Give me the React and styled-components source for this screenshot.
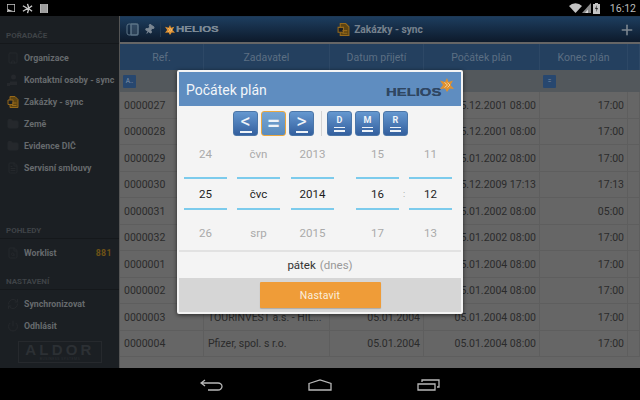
import React from 'react'
import styled, { createGlobalStyle } from 'styled-components'
import { Building, FileText, Folder, Power, RefreshCw, Pin, Plus, FileSearch } from 'lucide-react'

const GlobalStyle = createGlobalStyle`
    html, body { margin: 0; padding: 0; background: #000; }
    * { box-sizing: border-box; }
    body { font-family: Roboto, "Liberation Sans", sans-serif; }
`

const Screen = styled.div`
    position: relative;
    width: 640px;
    height: 400px;
    overflow: hidden;
    display: flex;
    flex-direction: column;
    background: #000;
`

const StatusBar = styled.div`
    height: 16px;
    display: flex;
    align-items: center;
    padding: 0 4px 0 7px;
    gap: 7px;
    color: #c9c9c9;
`

const Clock = styled.span`
    font-size: 10.5px;
    margin-left: 3px;
    color: #bdbdbd;
`

const Spacer = styled.div`
    flex: 1;
`

const Body = styled.div`
    flex: 1;
    display: flex;
    min-height: 0;
`

const Sidebar = styled.nav`
    width: 119px;
    background: #1b1f23;
    display: flex;
    flex-direction: column;
    padding-top: 12.5px;
`

const SideHeading = styled.div`
    font-size: 8px;
    font-weight: 700;
    color: #3f4347;
    height: 15px;
    line-height: 13px;
    padding-left: 6px;
    border-bottom: 1px solid #15181b;
    margin-top: ${p => p.$top || 0}px;
    margin-bottom: 3px;
`

const SideItem = styled.div`
    height: 22px;
    display: flex;
    align-items: center;
    padding: 0 7px;
    font-size: 8.8px;
    font-weight: 700;
    color: #666a6d;
    white-space: nowrap;
    gap: 5px;
    svg { flex: none; color: ${p => p.$active ? '#8a6216' : '#25282c'}; }
`

const Count = styled.span`
    margin-left: auto;
    color: #6e5216;
    letter-spacing: 0.4px;
`

const AldorBox = styled.div`
    margin: 4px 0 0 18px;
    width: 84px;
    height: 22px;
    border: 1px solid #26292d;
    display: flex;
    flex-direction: column;
    align-items: center;
    color: #2c3034;
`

const AldorName = styled.div`
    font: 700 15px/15px "Liberation Sans", sans-serif;
    letter-spacing: 3.2px;
`

const AldorSub = styled.div`
    font-size: 3.5px;
    line-height: 4px;
    letter-spacing: 0.5px;
`

const Content = styled.main`
    flex: 1;
    min-width: 0;
    display: flex;
    flex-direction: column;
    background: #666;
    border-left: 1px solid #555;
`

const TopBar = styled.header`
    height: 26px;
    flex: none;
    display: grid;
    grid-template-columns: 1fr auto 1fr;
    align-items: center;
    background: linear-gradient(#1d3d5e, #0d1a2b);
    border-top: 1px solid #1d3854;
    color: #7b8793;
`

const BarLeft = styled.div`
    display: flex;
    align-items: center;
    padding-left: 6px;
    gap: 4px;
`

const BarDivider = styled.div`
    width: 1px;
    height: 15px;
    background: #22384f;
`

const HeliosWord = styled.span`
    font: 700 ${p => p.$size}px/1 "Liberation Sans", sans-serif;
    color: ${p => p.$color};
    transform: scaleX(1.35);
    transform-origin: left center;
    display: inline-block;
    text-shadow: 0 0 0.5px ${p => p.$color};
`

const LogoRow = styled.div`
    display: flex;
    align-items: center;
    gap: 1px;
    width: 56px;
`

const BarTitle = styled.div`
    display: flex;
    align-items: center;
    gap: 4px;
    font-size: 10.2px;
    font-weight: 700;
    color: #76828e;
`

const BarRight = styled.div`
    display: flex;
    justify-content: flex-end;
    padding-right: 5px;
    color: #7d8790;
`

const Grid = styled.div`
    display: grid;
    grid-template-columns: 84px 126px 94px 116px 88px 1fr;
`

const HeadRow = styled(Grid)`
    height: 26px;
    margin-top: 2px;
    background: #24405f;
`

const HeadCell = styled.div`
    display: flex;
    align-items: center;
    justify-content: center;
    padding-top: 1px;
    font-size: 10.5px;
    color: #5c6f83;
    border-right: 1px solid #2d4866;
`

const FilterRow = styled(Grid)`
    height: 22px;
    background: #53585c;
`

const FilterCell = styled.div`
    display: flex;
    align-items: center;
    padding-left: 3px;
`

const FilterChip = styled.div`
    width: 13px;
    height: 13px;
    border-radius: 1px;
    background: #27476f;
    color: #8194aa;
    font-size: 6.5px;
    display: flex;
    align-items: center;
    justify-content: center;
`

const Row = styled(Grid)`
    height: 26.5px;
    border-bottom: 1px solid #5e5e5e;
`

const Cell = styled.div`
    display: flex;
    align-items: center;
    justify-content: ${p => p.$right ? 'flex-end' : 'flex-start'};
    padding: 1px 3px 0 4px;
    font-size: 10.5px;
    color: #2b2b2b;
    white-space: nowrap;
    overflow: hidden;
    border-right: 1px solid #5e5e5e;
`

const Modal = styled.section`
    position: absolute;
    left: 177px;
    top: 70px;
    width: 286px;
    height: 244px;
    background: #f4f4f4;
    border: 2px solid #f4f4f4;
    border-radius: 2px;
    box-shadow: 0 1px 4px rgba(0, 0, 0, 0.6);
    display: flex;
    flex-direction: column;
`

const ModalHead = styled.div`
    height: 34px;
    flex: none;
    background: #5f8dc0;
    display: flex;
    align-items: center;
    justify-content: space-between;
    padding: 2px 7px 0 7px;
`

const ModalTitle = styled.h2`
    margin: 0;
    font-size: 14px;
    font-weight: 400;
    color: #f2f5f9;
`

const ModalLogo = styled.div`
    position: relative;
    width: 68px;
    height: 24px;
    display: flex;
    align-items: center;
    padding-top: 4px;
`

const LogoStar = styled.div`
    position: absolute;
    right: 0;
    top: 0;
    line-height: 0;
`

const Toolbar = styled.div`
    height: 31px;
    flex: none;
    display: flex;
    align-items: flex-start;
    padding: 5px 0 0 54px;
    gap: 3px;
`

const ToolDivider = styled.div`
    width: 1px;
    height: 25px;
    background: #d4d4d4;
    margin: 0 2px 0 4px;
`

const ToolButton = styled.button`
    width: 25px;
    height: 25px;
    padding: 0;
    border-radius: 3px;
    border: 1px solid ${p => p.$active ? '#eba83f' : '#4b76a8'};
    background: ${p => p.$active
        ? 'linear-gradient(#78a6d3, #5a8bbd)'
        : 'linear-gradient(#6598d0, #335f9e)'};
    color: #eef3f8;
    font-family: Roboto, sans-serif;
    display: flex;
    flex-direction: column;
    align-items: center;
    justify-content: center;
`

const Symbol = styled.span`
    font-size: ${p => p.$small ? 9 : p.$heavy ? 24 : 20}px;
    font-weight: ${p => p.$small ? 700 : p.$heavy ? 500 : 400};
    line-height: ${p => p.$small ? 9 : 15}px;
`

const Bar = styled.span`
    display: block;
    width: ${p => p.$wide ? 12 : 11}px;
    height: 1.5px;
    background: #eef3f8;
    margin-top: 2px;
`

const Wheels = styled.div`
    display: flex;
    height: 115px;
    flex: none;
    padding-left: 5px;
    border-bottom: 2px solid #e2e2e2;
`

const Wheel = styled.div`
    width: 43px;
    margin-right: ${p => p.$gap}px;
    display: flex;
    flex-direction: column;
`

const WheelValue = styled.div`
    height: ${p => p.$selected ? 34 : 40}px;
    display: flex;
    align-items: center;
    justify-content: center;
    font-size: 11.5px;
    color: ${p => p.$selected ? '#1d1d1d' : '#aaa'};
    padding-bottom: ${p => p.$pos === 'top' ? 6 : 0}px;
    padding-top: ${p => p.$pos === 'bottom' ? 6 : 0}px;
    ${p => p.$selected && 'border-top: 2px solid #7ccbec; border-bottom: 2px solid #7ccbec;'}
`

const Colon = styled.div`
    width: 10px;
    text-align: center;
    font-size: 9px;
    color: #999;
    line-height: 114px;
`

const DayLine = styled.div`
    height: 26px;
    flex: none;
    display: flex;
    align-items: center;
    justify-content: center;
    gap: 4px;
    font-size: 11.5px;
    color: #333;
`

const DayNote = styled.span`
    color: #999;
`

const Footer = styled.div`
    flex: 1;
    background: #d6d6d6;
    display: flex;
    justify-content: center;
    padding-top: 4px;
`

const SetButton = styled.button`
    width: 121px;
    height: 26px;
    border: 0;
    border-radius: 1px;
    background: #ef9c38;
    box-shadow: 0 1px 1px rgba(0, 0, 0, 0.2);
    color: #fbeedd;
    font-family: Roboto, sans-serif;
    font-size: 10.5px;
    letter-spacing: 0.2px;
`

const NavBar = styled.footer`
    height: 32px;
    flex: none;
    display: grid;
    grid-template-columns: repeat(3, 108px);
    padding: 2px 0 0 158px;
    align-items: center;
    justify-items: center;
    color: #b8b8b8;
`

const Star = ({ size = 12, color = '#e0912f' }) => (
    <svg width={size} height={size} viewBox="0 0 14 14" fill={color}>
        <path d="M7 0 8.500 4 13 2.500 10.500 7 14 11l-4.500-.5L7 14l-2-3.500L0 11l3-4L0 2.500 5 4z" />
        <path d="M4.500 4.500 7.500 7l-3 2.500M7.500 4.500 10 7l-2.500 2.500" fill="none" stroke="#f6cf93" strokeWidth="1" />
    </svg>
)

// zakazka: list s ohnutym rohem a radky textu
const OrderIcon = ({ size = 12 }) => (
    <svg width={size} height={size} viewBox="0 0 12 12">
        <path d="M3 .5h5L11 3.500v8H3z" fill="#5e4512" stroke="#96691a" />
        <path d="M1 4h5v4.500H1z" fill="#1b1f23" stroke="#96691a" />
        <path d="M5 9.500h4.500M5 7h4.500" stroke="#96691a" />
    </svg>
)

const ContactIcon = () => (
    <svg width="12" height="12" viewBox="0 0 12 12" fill="currentColor">
        <circle cx="6.500" cy="3" r="2.500" />
        <path d="M3 11V7.500h7V11z" />
        <path d="M0 9h3v3H0z" />
    </svg>
)

const heads = ['Ref.', 'Zadavatel', 'Datum přijetí', 'Počátek plán', 'Konec plán', '']

// stredni sloupce jsou pod dialogem, vyplnene jen tam, kde jsou videt
const rows = [
    ['0000027', '', '', '05.12.2001 08:00', '17:00'],
    ['0000028', '', '', '05.12.2001 08:00', '17:00'],
    ['0000029', '', '', '05.01.2002 08:00', '17:00'],
    ['0000030', '', '', '05.12.2009 17:13', '17:13'],
    ['0000031', '', '', '05.01.2002 08:00', '05:00'],
    ['0000032', '', '', '05.01.2002 08:00', '17:00'],
    ['0000001', '', '', '05.01.2004 08:00', '17:00'],
    ['0000002', '', '', '05.01.2004 08:00', '17:00'],
    ['0000003', 'TOURINVEST a.s. - HIL...', '05.01.2004', '05.01.2004 08:00', '17:00'],
    ['0000004', 'Pfizer, spol. s r.o.', '05.01.2004', '05.01.2004 08:00', '17:00'],
]

const wheels = [
    { values: ['24', '25', '26'], gap: 10 },
    { values: ['čvn', 'čvc', 'srp'], gap: 11 },
    { values: ['2013', '2014', '2015'], gap: 22 },
    { values: ['15', '16', '17'], gap: 0 },
    { values: ['11', '12', '13'], gap: 0, colon: true },
]

const App = () => (
    <Screen>
        <GlobalStyle />
        <StatusBar>
            <svg width="8" height="8" viewBox="0 0 8 8"><path d="M0 0h8v8H0z" fill="none" stroke="currentColor" strokeWidth="1.4" /><path d="M1 7V5l2 1 3 1z" fill="currentColor" /></svg>
            <svg width="11" height="11" viewBox="0 0 12 12" stroke="currentColor" strokeWidth="1.5" fill="none"><path d="M1 3 6 6 1 9M6 1 7.500 6 6 11M11 3 7 6 11 9" /></svg>
            <svg width="8" height="9" viewBox="0 0 8 9"><path d="M0 0h8v9H0z" fill="#b5b5b5" /><path d="M2 0v9M4 0v9M6 0v9" stroke="#666" strokeWidth=".6" /></svg>
            <Spacer />
            <svg width="13" height="10" viewBox="0 0 13 10"><path d="M0 3a9 9 0 0 1 13 0L6.500 10z" fill="#c4c4c4" /></svg>
            <svg width="9" height="10" viewBox="0 0 9 10" style={{ marginLeft: -7 }}><path d="M0 10 9 0v10z" fill="#8a8a8a" /><path d="M3 10 6 6.500V10z" fill="#ddd" /></svg>
            <svg width="7" height="11" viewBox="0 0 7 11" style={{ marginLeft: -5 }}><path d="M2 0h3v1h2v10H0V1h2z" fill="#c4c4c4" /><path d="M4 2 2 6h1.500L3 9l2-4H3.500z" fill="#222" /></svg>
            <Clock>16:12</Clock>
        </StatusBar>
        <Body>
            <Sidebar>
                <SideHeading>POŘADAČE</SideHeading>
                <SideItem><Building size={12} />Organizace</SideItem>
                <SideItem><ContactIcon />Kontaktní osoby - sync</SideItem>
                <SideItem $active><OrderIcon />Zakázky - sync</SideItem>
                <SideItem><Folder size={12} fill="currentColor" />Země</SideItem>
                <SideItem><Folder size={12} fill="currentColor" />Evidence DIČ</SideItem>
                <SideItem><FileText size={12} />Servisní smlouvy</SideItem>
                <SideHeading $top={45}>POHLEDY</SideHeading>
                <SideItem><FileSearch size={12} />Worklist<Count>881</Count></SideItem>
                <SideHeading $top={11.5}>NASTAVENÍ</SideHeading>
                <SideItem><RefreshCw size={12} />Synchronizovat</SideItem>
                <SideItem><Power size={12} />Odhlásit</SideItem>
                <AldorBox>
                    <AldorName>ALDOR</AldorName>
                    <AldorSub>BUSINESS SYSTEMS</AldorSub>
                </AldorBox>
            </Sidebar>
            <Content>
                <TopBar>
                    <BarLeft>
                        <svg width="13" height="13" viewBox="0 0 13 13" fill="none" stroke="#5d7487" strokeWidth="1"><rect x="1" y="1" width="11" height="11" rx="2" /><path d="M5 1v11" /><path d="M5 1h7v11H5z" fill="#5d7487" fillOpacity=".35" /></svg>
                        <Pin size={11} fill="#7b8793" style={{ transform: 'rotate(35deg)', margin: '0 1px' }} />
                        <BarDivider />
                        <LogoRow>
                            <Star size={10} />
                            <HeliosWord $size={8.5} $color="#7d8a96">HELIOS</HeliosWord>
                        </LogoRow>
                    </BarLeft>
                    <BarTitle><OrderIcon size={13} />Zakázky - sync</BarTitle>
                    <BarRight><Plus size={16} strokeWidth={2.4} /></BarRight>
                </TopBar>
                <HeadRow>
                    {heads.map((h, i) => <HeadCell key={i}>{h}</HeadCell>)}
                </HeadRow>
                <FilterRow>
                    <FilterCell><FilterChip>A..</FilterChip></FilterCell>
                    <FilterCell />
                    <FilterCell />
                    <FilterCell />
                    <FilterCell><FilterChip>=</FilterChip></FilterCell>
                </FilterRow>
                {rows.map(r => (
                    <Row key={r[0]}>
                        <Cell>{r[0]}</Cell>
                        <Cell>{r[1]}</Cell>
                        <Cell $right>{r[2]}</Cell>
                        <Cell $right>{r[3]}</Cell>
                        <Cell $right>{r[4]}</Cell>
                        <Cell />
                    </Row>
                ))}
            </Content>
        </Body>
        <NavBar>
            <svg width="24" height="12" viewBox="0 0 24 12" fill="none" stroke="currentColor" strokeWidth="1.3"><path d="M5 1 1 4l4 3M1 4h17a4 3.500 0 0 1 0 7H8" /></svg>
            <svg width="24" height="12" viewBox="0 0 24 12" fill="none" stroke="currentColor" strokeWidth="1.3"><path d="M1 4.500 12 1l11 3.500V11H1z" /></svg>
            <svg width="23" height="12" viewBox="0 0 23 12" fill="none" stroke="currentColor" strokeWidth="1.3"><path d="M1 5h17v6H1zM5 3V1h17v7h-2" /></svg>
        </NavBar>
        <Modal>
            <ModalHead>
                <ModalTitle>Počátek plán</ModalTitle>
                <ModalLogo>
                    <HeliosWord $size={11} $color="#2f4662">HELIOS</HeliosWord>
                    <LogoStar><Star size={14} /></LogoStar>
                </ModalLogo>
            </ModalHead>
            <Toolbar>
                <ToolButton><Symbol>&lt;</Symbol><Bar $wide /></ToolButton>
                <ToolButton $active><Symbol $heavy>=</Symbol></ToolButton>
                <ToolButton><Symbol>&gt;</Symbol><Bar $wide /></ToolButton>
                <ToolDivider />
                <ToolButton><Symbol $small>D</Symbol><Bar /><Bar /></ToolButton>
                <ToolButton><Symbol $small>M</Symbol><Bar /><Bar /></ToolButton>
                <ToolButton><Symbol $small>R</Symbol><Bar /><Bar /></ToolButton>
            </Toolbar>
            <Wheels>
                {wheels.map(w => (
                    <React.Fragment key={w.values[1]}>
                        {w.colon && <Colon>:</Colon>}
                        <Wheel $gap={w.gap}>
                            <WheelValue $pos="top">{w.values[0]}</WheelValue>
                            <WheelValue $selected>{w.values[1]}</WheelValue>
                            <WheelValue $pos="bottom">{w.values[2]}</WheelValue>
                        </Wheel>
                    </React.Fragment>
                ))}
            </Wheels>
            <DayLine>pátek <DayNote>(dnes)</DayNote></DayLine>
            <Footer><SetButton>Nastavit</SetButton></Footer>
        </Modal>
    </Screen>
)

export default App
